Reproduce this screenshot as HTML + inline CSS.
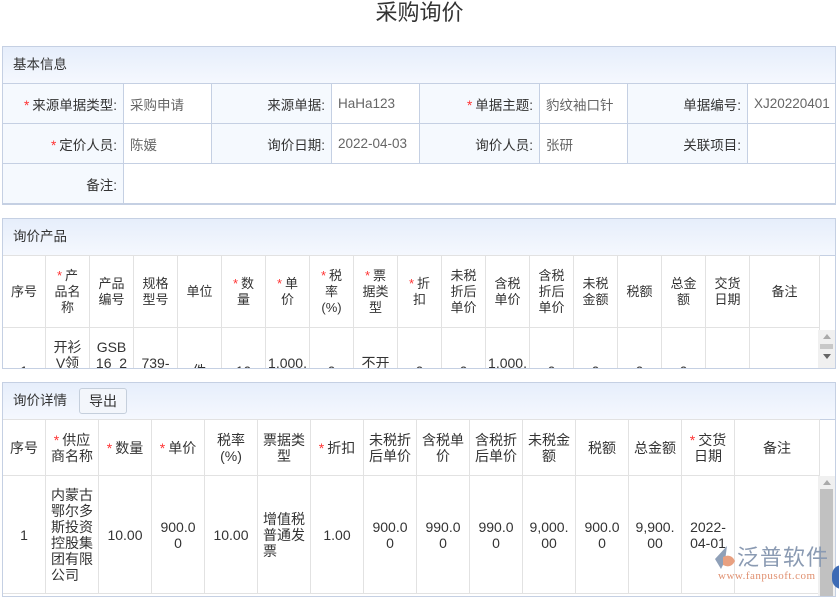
<!DOCTYPE html>
<html><head><meta charset="utf-8"><style>
*{box-sizing:border-box;margin:0;padding:0}
body{width:839px;height:592px;overflow:hidden;background:#fff;font-family:"Liberation Sans","Noto Sans CJK SC",sans-serif;font-size:13px;color:#333;position:relative}
.title{position:absolute;top:0;left:0;width:839px;text-align:center;font-size:22px;line-height:26px;color:#333}
.panel{position:absolute;left:2px;width:834px;border:1px solid #c5d0e3;overflow:hidden}
.ph{height:37px;background:linear-gradient(#e6eefb,#f5f8fe);border-bottom:1px solid #c5d0e3;line-height:36px;padding-left:10px;color:#333;font-size:13.5px}
.req{color:#f33;margin-right:3px}
table{border-collapse:collapse;table-layout:fixed}
.basic td{height:40px;border:1px solid #c5d0e3;padding:0 6px;font-size:13.5px;white-space:nowrap}
.basic td.l{background:#f5f9fe;text-align:right;color:#333}
.basic td.v{color:#666}
.grid td,.grid th{border:1px solid #e2e2e2;text-align:center;font-weight:normal;line-height:16px;vertical-align:middle;color:#333;font-size:14px}
.pg th{font-size:13px;padding:0 8px}
.btn{display:inline-block;margin-left:12px;width:48px;height:26px;border:1px solid #c5cfdc;border-radius:3px;background:#f3f6fb;text-align:center;line-height:24px;vertical-align:middle;font-size:14px}
.sb{position:absolute;right:0;width:17px;background:#f0f0f0}
</style></head><body>
<div class="title">采购询价</div>

<div class="panel" style="top:46px;height:159px">
<div class="ph">基本信息</div>
<table class="basic" style="width:834px;margin:-1px 0 0 -1px">
<colgroup><col style="width:121px"><col style="width:88px"><col style="width:120px"><col style="width:88px"><col style="width:120px"><col style="width:88px"><col style="width:120px"><col style="width:90px"></colgroup>
<tr><td class="l"><span class="req">*</span>来源单据类型:</td><td class="v">采购申请</td><td class="l">来源单据:</td><td class="v">HaHa123</td><td class="l"><span class="req">*</span>单据主题:</td><td class="v">豹纹袖口针</td><td class="l">单据编号:</td><td class="v">XJ20220401</td></tr>
<tr><td class="l"><span class="req">*</span>定价人员:</td><td class="v">陈媛</td><td class="l">询价日期:</td><td class="v">2022-04-03</td><td class="l">询价人员:</td><td class="v">张研</td><td class="l">关联项目:</td><td class="v"></td></tr>
<tr><td class="l">备注:</td><td class="v" colspan="7"></td></tr>
</table>
</div>

<div class="panel" style="top:218px;height:151px">
<div class="ph">询价产品</div>
<table class="grid pg" style="width:817px;margin:-1px 0 0 -1px">
<colgroup><col style="width:43px"><col style="width:44px"><col style="width:44px"><col style="width:44px"><col style="width:44px"><col style="width:44px"><col style="width:44px"><col style="width:44px"><col style="width:44px"><col style="width:44px"><col style="width:44px"><col style="width:44px"><col style="width:44px"><col style="width:44px"><col style="width:44px"><col style="width:44px"><col style="width:44px"><col style="width:70px"></colgroup>
<tr style="height:72px"><th style="padding:0">序号</th><th style="padding:0 6px"><span class="req">*</span>产品名称</th><th>产品编号</th><th>规格型号</th><th style="padding:0">单位</th><th style="padding:0 6px"><span class="req">*</span>数量</th><th style="padding:0 6px"><span class="req">*</span>单价</th><th style="padding:0 6px"><span class="req">*</span>税率(%)</th><th style="padding:0 6px"><span class="req">*</span>票据类型</th><th style="padding:0 6px"><span class="req">*</span>折扣</th><th>未税折后单价</th><th>含税单价</th><th>含税折后单价</th><th>未税金额</th><th style="padding:0">税额</th><th>总金额</th><th>交货日期</th><th style="padding:0">备注</th></tr>
<tr style="height:86px"><td>1</td><td style="padding:0 5px">开衫V领毛衣开衫</td><td style="padding:0 4px;word-break:break-all">GSB 16_2 001 01</td><td style="padding:0 4px;word-break:break-all">739-001</td><td>件</td><td>10</td><td style="word-break:break-all">1,000.00</td><td>0</td><td style="padding:0 6px">不开票</td><td>0</td><td>0</td><td style="word-break:break-all">1,000.00</td><td>0</td><td>0</td><td>0</td><td>0</td><td></td><td></td></tr>
</table>
<div class="sb" style="top:111px;height:39px"><div style="margin:4px auto 0;width:0;border:4px solid transparent;border-bottom:5px solid #aaa;border-top:0"></div><div style="margin:5px 2px;height:5px;background:#c8c8c8"></div><div style="margin:3px auto 0;width:0;border:4px solid transparent;border-top:5px solid #666;border-bottom:0"></div></div>
</div>

<div class="panel" style="top:382px;height:215px">
<div class="ph">询价详情<span class="btn">导出</span></div>
<table class="grid" style="width:817px;margin:-1px 0 0 -1px">
<colgroup><col style="width:43px"><col style="width:53px"><col style="width:53px"><col style="width:53px"><col style="width:53px"><col style="width:53px"><col style="width:53px"><col style="width:53px"><col style="width:53px"><col style="width:53px"><col style="width:53px"><col style="width:53px"><col style="width:53px"><col style="width:53px"><col style="width:85px"></colgroup>
<tr style="height:56px"><th>序号</th><th style="padding:0 5px"><span class="req">*</span>供应商名称</th><th><span class="req">*</span>数量</th><th><span class="req">*</span>单价</th><th style="padding:0 5px">税率(%)</th><th style="padding:0 5px">票据类型</th><th><span class="req">*</span>折扣</th><th style="padding:0 4px">未税折后单价</th><th style="padding:0 5px">含税单价</th><th style="padding:0 4px">含税折后单价</th><th style="padding:0 5px">未税金额</th><th>税额</th><th>总金额</th><th style="padding:0 5px"><span class="req">*</span>交货日期</th><th>备注</th></tr>
<tr style="height:118px"><td>1</td><td style="padding:0 5px;text-align:left">内蒙古鄂尔多斯投资控股集团有限公司</td><td>10.00</td><td style="padding:0 7px;word-break:break-all">900.00</td><td>10.00</td><td style="padding:0 5px;text-align:left">增值税普通发票</td><td>1.00</td><td style="padding:0 7px;word-break:break-all">900.00</td><td style="padding:0 7px;word-break:break-all">990.00</td><td style="padding:0 7px;word-break:break-all">990.00</td><td style="padding:0 6px;word-break:break-all">9,000.00</td><td style="padding:0 7px;word-break:break-all">900.00</td><td style="padding:0 6px;word-break:break-all">9,900.00</td><td style="padding:0 6px;word-break:break-all">2022-04-01</td><td></td></tr>
</table>
<div class="sb" style="top:93px;height:130px"><div style="margin:4px auto 0;width:0;border:4px solid transparent;border-bottom:5px solid #aaa;border-top:0"></div><div style="margin:4px 2px;height:110px;background:#c1c1c1"></div></div>
</div>

<div style="position:absolute;left:709px;top:543px;width:30px;height:30px">
<svg width="30" height="30" viewBox="0 0 30 30"><path d="M18 3 L6 16 L12 26 L16 18 Z" fill="#8fa0b8"/><path d="M14 14 Q22 10 26 18 Q22 26 14 22 Z" fill="#e8a080"/></svg></div>
<div style="position:absolute;left:737px;top:545px;font-size:22px;color:#8a9ab2;letter-spacing:1px;line-height:26px">泛普软件</div>
<div style="position:absolute;left:718px;top:570px;font-size:11px;color:#e09070;font-family:'Liberation Serif',serif;letter-spacing:0.5px">www.fanpusoft.com</div>
<div style="position:absolute;left:832px;top:565px;width:20px;height:24px;border-radius:10px;background:#3d6bb5"></div>
</body></html>
